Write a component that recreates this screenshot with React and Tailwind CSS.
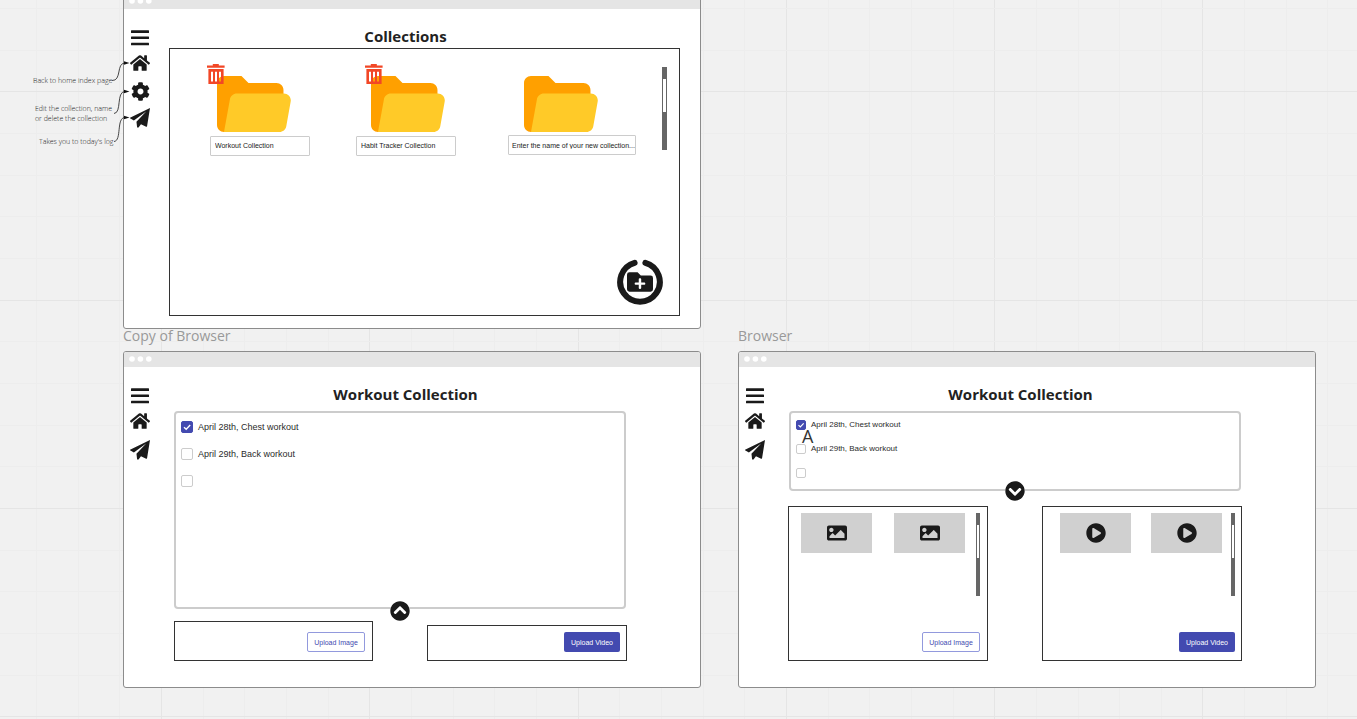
import React from "react";
import { FaHome, FaCog, FaFolderPlus, FaImage, FaPlayCircle, FaChevronCircleUp, FaChevronCircleDown } from "react-icons/fa";

const MAJOR = 208.3;
const MINOR = MAJOR / 5;

function BoardGrid() {
  const steps = Array.from({ length: 80 }, (_, i) => i);
  return (
    <svg className="absolute inset-0 h-full w-full" aria-hidden="true" shapeRendering="crispEdges">
      {steps.map((i) => {
        const major = i % 5 === 4;
        return (
          <rect key={"v" + i} x={Math.round(36 + (i - 1) * MINOR)} y="0" width="1" height="100%" fill={major ? "#e5e5e5" : "#ededed"} />
        );
      })}
      {steps.map((i) => {
        const major = i % 5 === 2;
        return (
          <rect key={"h" + i} x="0" y={Math.round(8 + i * MINOR)} width="100%" height="1" fill={major ? "#e5e5e5" : "#ededed"} />
        );
      })}
    </svg>
  );
}

function MenuIcon() {
  return (
    <svg viewBox="0 0 18 16" className="h-4 w-[18px]" fill="#1a1a1a" aria-hidden="true">
      <rect x="0" y="0.3" width="18" height="2.6" rx="0.5" />
      <rect x="0" y="6.5" width="18" height="2.6" rx="0.5" />
      <rect x="0" y="12.7" width="18" height="2.6" rx="0.5" />
    </svg>
  );
}

function PlaneIcon() {
  return (
    <svg viewBox="0 0 62 62" className="h-5 w-5" fill="#1a1a1a" aria-hidden="true">
      <path d="M62 0 L0 30 Q-1 31 0 32 L12 39 L50 11 L20 43 L22 60 Q25 63 27 60 L34 50 L50 58 Q53 59 53 56 Z" />
    </svg>
  );
}

function TrashIcon() {
  return (
    <svg viewBox="0 0 18 20" className="h-5 w-[18px]" fill="#f24726" aria-hidden="true">
      <path d="M5.8 0h6v1.4H17.6v2.4H0V1.4h5.8z" />
      <path fillRule="evenodd" d="M1.4 5h15.2v15h-15.2z M4 7.8v9.8h2V7.8z M8 7.8v9.8h2V7.8z M12 7.8v9.8h2V7.8z" />
    </svg>
  );
}

function FolderIcon() {
  return (
    <svg viewBox="4 8 42.3 32" className="h-14 w-[74px]" aria-hidden="true">
      <path fill="#FFA000" d="M38,12H22l-4-4H8c-2.2,0-4,1.8-4,4v24c0,2.2,1.8,4,4,4h31c1.7,0,3-1.3,3-3V16C42,13.8,40.2,12,38,12z" />
      <path fill="#FFCA28" d="M42.2,18H15.3c-1.9,0-3.6,1.4-3.9,3.3L8,40h31.7c1.9,0,3.6-1.4,3.9-3.3l2.5-14C46.6,20.3,44.7,18,42.2,18z" />
    </svg>
  );
}

function Scrollbar({ className = "w-1" }) {
  return (
    <div className={"flex h-[83px] shrink-0 flex-col bg-[#666] px-px pt-3 " + className}>
      <div className="h-[33px] bg-white" />
    </div>
  );
}

function NavRail({ settings = false }) {
  return (
    <nav aria-label="Main" className="flex w-8 shrink-0 flex-col items-center pt-[21px]">
      <button type="button" aria-label="Menu" className="flex h-4"><MenuIcon /></button>
      <a href="#home" aria-label="Home" className="mt-2 flex"><FaHome className="h-[18px] w-5 text-[#1a1a1a]" /></a>
      {settings && (
        <button type="button" aria-label="Edit collection" className="mt-2.5 flex"><FaCog className="size-[19px] text-[#1a1a1a]" /></button>
      )}
      <a href="#today" aria-label="Today's log" className={settings ? "mt-[7px] flex" : "mt-2.5 flex"}><PlaneIcon /></a>
    </nav>
  );
}

function BrowserFrame({ title, settings, className, children }) {
  return (
    <section className={"absolute flex w-[578px] flex-col overflow-hidden rounded-[3px] border border-[#8c8c8c] bg-white " + className}>
      <div className="flex h-[15px] shrink-0 items-center bg-[#e5e5e5] pb-px pl-[5px]">
        <svg viewBox="0 0 24 6" className="h-1.5 w-6" fill="#fff" aria-hidden="true">
          <circle cx="3" cy="3" r="2.8" />
          <circle cx="11.4" cy="3" r="2.8" />
          <circle cx="19.8" cy="3" r="2.8" />
        </svg>
      </div>
      <div className="flex flex-1">
        <NavRail settings={settings} />
        <div className="flex min-w-0 flex-1 flex-col">
          <h2 className="mt-[17px] mr-[53px] mb-px ml-2 text-center text-[15px] leading-5 font-bold text-[#222]">{title}</h2>
          {children}
        </div>
      </div>
    </section>
  );
}

function CollectionCard({ id, name, fresh = false, folderClass, trashClass = "", className }) {
  return (
    <li className={"relative flex flex-col " + className}>
      <div className={"flex " + folderClass}>
        <div className="relative">
          <FolderIcon />
          {!fresh && (
            <button type="button" aria-label={"Delete " + name} className={"absolute -top-3 " + trashClass}><TrashIcon /></button>
          )}
        </div>
      </div>
      <input
        id={id}
        aria-label="Collection name"
        defaultValue={fresh ? undefined : name}
        placeholder={fresh ? name : undefined}
        className={"h-5 w-full rounded-[1px] border border-[#ccc] bg-white font-['Liberation_Sans',sans-serif] text-[7px] text-[#222] placeholder:text-[#222] " + (fresh ? "mt-[3px] pl-[3px]" : "mt-1 pb-px pl-1")}
      />
    </li>
  );
}

function Task({ id, label, done = false, compact = false }) {
  const box = compact ? "size-2.5" : "size-3";
  return (
    <li className={compact ? "flex h-6 items-center gap-[5px]" : "flex h-[27px] items-center gap-[5px]"}>
      <span className="relative flex">
        <input id={id} type="checkbox" defaultChecked={done} aria-label={label || "New entry"} className={"peer appearance-none rounded-[2px] border border-[#ccc] bg-white checked:border-[#434ab0] checked:bg-[#434ab0] " + box} />
        <svg viewBox="0 0 12 12" className={"pointer-events-none absolute inset-0 hidden peer-checked:block " + box} fill="none" stroke="#fff" strokeWidth="1.4" aria-hidden="true">
          <path d="M3 6.2 L5.2 8.2 L9.2 4" />
        </svg>
      </span>
      <label htmlFor={id} className={"font-['Liberation_Sans',sans-serif] text-[#2b2b2b] " + (compact ? "text-[8px] leading-3" : "text-[9px] leading-3")}>{label}</label>
    </li>
  );
}

function UploadButton({ kind }) {
  const look = kind === "Image" ? "w-[58px] border border-[#9299dd] bg-white text-[#434ab0]" : "w-14 bg-[#434ab0] text-white";
  return (
    <button type="button" className={"h-5 shrink-0 rounded-[2px] font-['Liberation_Sans',sans-serif] text-[7px] leading-none whitespace-nowrap " + look}>
      Upload {kind}
    </button>
  );
}

function MediaPanel({ kind, Icon, gapClass, padClass }) {
  return (
    <div className={"flex h-[155px] w-[200px] flex-col justify-between border border-[#333] pt-1.5 pb-2 " + padClass}>
      <div className="flex justify-between">
        <div className={"flex " + gapClass}>
          {[0, 1].map((n) => (
            <div key={n} className="flex h-10 w-[71px] items-center justify-center bg-[#d0d0d0]">
              <Icon className="size-5 text-[#1a1a1a]" />
            </div>
          ))}
        </div>
        <Scrollbar />
      </div>
      <div className="flex justify-end"><UploadButton kind={kind} /></div>
    </div>
  );
}

const noteText = "absolute text-[7px] leading-[10px] font-light whitespace-pre text-[#222]";
const frameLabel = "absolute top-[326px] text-sm leading-5 text-[#999]";

export default function App() {
  return (
    <main className="relative h-screen w-full overflow-hidden bg-[#f1f1f1] font-['Open_Sans',sans-serif]">
      <BoardGrid />

      <BrowserFrame title="Collections" settings className="-top-[7px] left-[123px] h-[336px]">
        <div className="mt-px mr-5 ml-[13px] flex h-[268px] flex-col justify-between border border-[#333]">
          <div className="flex items-start justify-between pt-[18px] pr-3 pl-10">
            <ul className="flex items-start pt-[9px]">
              <CollectionCard id="c1" name="Workout Collection" className="w-[100px]" folderClass="pl-[7px]" trashClass="-left-2.5" />
              <CollectionCard id="c2" name="Habit Tracker Collection" className="ml-[46px] w-[100px]" folderClass="pl-[15px]" trashClass="-left-1.5" />
              <CollectionCard id="c3" name="Enter the name of your new collection..." fresh className="ml-[52px] w-32" folderClass="pl-4" />
            </ul>
            <Scrollbar className="w-[5px]" />
          </div>
          <div className="flex justify-end pr-4 pb-2.5">
            <button type="button" aria-label="Add collection" className="relative flex size-[46px] items-center justify-center">
              <svg viewBox="0 0 46 46" className="absolute inset-0 size-[46px]" fill="none" stroke="#1a1a1a" strokeWidth="6" strokeLinecap="round" aria-hidden="true">
                <path d="M17.6 3.8 A19.8 19.8 0 1 0 28.4 3.8" />
              </svg>
              <FaFolderPlus className="size-[26px] text-[#1a1a1a]" />
            </button>
          </div>
        </div>
      </BrowserFrame>

      <p className={noteText + " top-[76px] left-[33px]"}>Back to home index page</p>
      <p className={noteText + " top-[104px] left-[35px]"}>{"Edit the collection, name\nor delete the collection"}</p>
      <p className={noteText + " top-[137px] left-[39px]"}>Takes you to today's log</p>
      <svg viewBox="0 0 20 90" className="absolute top-[56px] left-[112px] h-[90px] w-5" fill="none" stroke="#333" strokeWidth="0.9" aria-hidden="true">
        <path d="M0 24.5 C10 25 4 7 13 7" />
        <path d="M2 57.5 C10 57 4 35.5 13 35.5" />
        <path d="M2 85.5 C10 85 4 61.5 13 61.5" />
        <path stroke="none" fill="#111" d="M12 5.2 L17.5 7 L12 8.8z M12 33.7 L17.5 35.5 L12 37.3z M12 59.7 L17.5 61.5 L12 63.3z" />
      </svg>

      <p className={frameLabel + " left-[123px]"}>Copy of Browser</p>
      <BrowserFrame title="Workout Collection" className="top-[351px] left-[123px] h-[337px]">
        <div className="relative mt-1.5 mr-[74px] ml-[18px] h-[198px] rounded-[4px] border-2 border-[#ccc] pl-[5px]">
          <ul>
            <Task id="a1" label="April 28th, Chest workout" done />
            <Task id="a2" label="April 29th, Back workout" />
            <Task id="a3" label="" />
          </ul>
          <button type="button" aria-label="Collapse list" className="absolute -bottom-3.5 left-1/2 flex -translate-x-1/2 rounded-full bg-white"><FaChevronCircleUp className="size-5 text-[#1a1a1a]" /></button>
        </div>
        <div className="mt-3 mr-[73px] ml-[18px] flex items-end justify-between">
          <div className="flex h-10 w-[199px] items-end justify-end border border-[#333] pr-[7px] pb-2"><UploadButton kind="Image" /></div>
          <div className="flex h-9 w-[200px] items-end justify-end border border-[#333] pr-1.5 pb-2"><UploadButton kind="Video" /></div>
        </div>
      </BrowserFrame>

      <p className={frameLabel + " left-[738px]"}>Browser</p>
      <BrowserFrame title="Workout Collection" className="top-[351px] left-[738px] h-[337px]">
        <div className="relative mt-1.5 mr-[74px] ml-[18px] h-20 rounded-[4px] border-2 border-[#ccc] pl-[5px]">
          <ul>
            <Task id="b1" label="April 28th, Chest workout" done compact />
            <Task id="b2" label="April 29th, Back workout" compact />
            <Task id="b3" label="" compact />
          </ul>
          <span className="absolute top-[11px] left-[11px] text-lg leading-6 text-[#333]">A</span>
          <button type="button" aria-label="Expand list" className="absolute -bottom-3 left-1/2 flex -translate-x-1/2 rounded-full bg-white"><FaChevronCircleDown className="size-5 text-[#1a1a1a]" /></button>
        </div>
        <div className="mt-[15px] mr-[73px] ml-[17px] flex justify-between">
          <MediaPanel kind="Image" Icon={FaImage} gapClass="gap-[22px]" padClass="pr-[7px] pl-3" />
          <MediaPanel kind="Video" Icon={FaPlayCircle} gapClass="gap-5" padClass="pr-1.5 pl-[17px]" />
        </div>
      </BrowserFrame>
    </main>
  );
}
